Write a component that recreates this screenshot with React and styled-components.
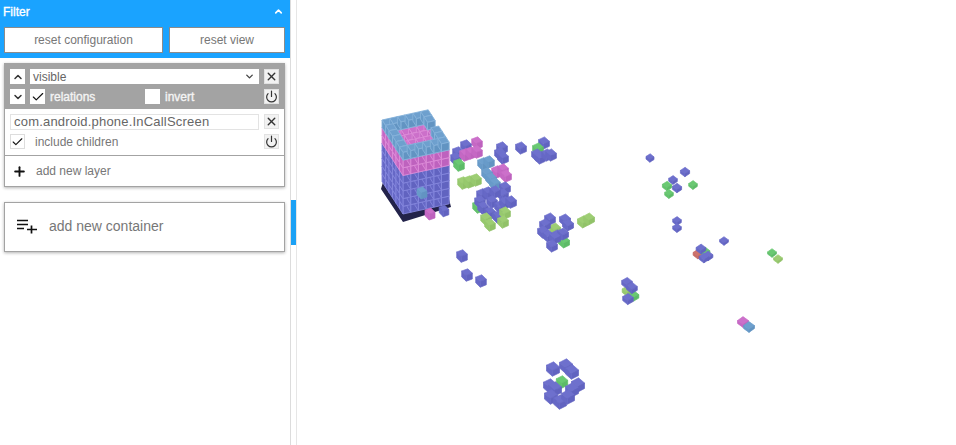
import React from "react";
import styled, { createGlobalStyle } from "styled-components";
import { ChevronUp, ChevronDown, X, Power, Check, Plus } from "lucide-react";

const Global = createGlobalStyle`
  html, body { margin: 0; padding: 0; background: #fff; overflow: hidden; }
  #root { height: 445px; }
  * { box-sizing: border-box; }
`;

const Page = styled.div`
  display: flex;
  width: 956px;
  height: 445px;
  font-family: "Liberation Sans", Arial, sans-serif;
  color: #777;
`;
const Sidebar = styled.aside`
  width: 290px;
  flex: none;
  display: flex;
  flex-direction: column;
`;
const Splitter = styled.div`
  position: relative;
  width: 7px;
  flex: none;
  border-left: 1px solid #dcdcdc;
  border-right: 1px solid #e6e6e6;
`;
const Thumb = styled.div`
  position: absolute;
  left: 0;
  top: 200px;
  width: 5px;
  height: 45px;
  background: #1ba1f5;
`;
const Header = styled.header`
  height: 58px;
  flex: none;
  background: #1aa3ff;
  padding: 0 4px;
  display: flex;
  flex-direction: column;
`;
const TitleRow = styled.div`
  height: 27px;
  display: flex;
  align-items: center;
  justify-content: space-between;
  padding-bottom: 4px;
  padding-right: 2px;
  margin-left: -1px;
  color: #fff;
  font-size: 12px;
  -webkit-text-stroke: 0.35px #fff;
`;
const HeaderButtons = styled.div`
  display: flex;
  gap: 6px;
`;
const HeaderButton = styled.button`
  width: ${(p) => p.$w}px;
  height: 26px;
  padding: 0 0 1px;
  background: #fff;
  border: 1px solid #8b8b8b;
  color: #777;
  font: 12px "Liberation Sans", Arial, sans-serif;
`;
const Card = styled.section`
  width: 281px;
  margin: ${(p) => p.$top}px 0 0 4px;
  background: #fff;
  border: 1px solid #a3a3a3;
  box-shadow: 0 1px 3px rgba(0, 0, 0, 0.3);
`;
const GrayPanel = styled.div`
  height: 45px;
  background: #a3a3a3;
  padding: 5px 5px 0;
  display: flex;
  flex-direction: column;
  gap: 5px;
`;
const Row = styled.div`
  display: flex;
  align-items: center;
  height: 15px;
`;
const SquareButton = styled.span`
  width: 15px;
  height: 15px;
  flex: none;
  display: flex;
  align-items: center;
  justify-content: center;
  background: ${(p) => (p.$ghost ? "#f2f2f2" : "#fff")};
  border: ${(p) => (p.$ghost ? "1px solid #e2e2e2" : "none")};
  color: #333;
`;
const SelectBox = styled.div`
  width: 229px;
  height: 15px;
  margin: 0 5px;
  background: #fff;
  display: flex;
  align-items: center;
  justify-content: space-between;
  padding: 0 4px 0 3px;
  font-size: 12px;
  color: #666;
`;
const CheckBox = styled.span`
  width: 15px;
  height: 15px;
  flex: none;
  margin-left: ${(p) => p.$left || 0}px;
  display: flex;
  align-items: center;
  justify-content: center;
  background: #fff;
  border: ${(p) => (p.$outlined ? "1px solid #ddd" : "none")};
  color: #111;
`;
const PanelLabel = styled.span`
  width: ${(p) => p.$w}px;
  padding-left: 5px;
  flex: none;
  color: #f4f4f4;
  font-size: 12px;
  -webkit-text-stroke: 0.35px #f4f4f4;
`;
const WhitePanel = styled.div`
  padding: 5px 5px 0;
  height: 47px;
  display: flex;
  flex-direction: column;
  gap: 5px;
  border-bottom: 1px solid #a3a3a3;
`;
const TextField = styled.input`
  width: 249px;
  height: 16px;
  margin-right: 5px;
  padding: 0 3px;
  border: 1px solid #e3e3e3;
  outline: none;
  color: #666;
  font: 13px "Liberation Sans", Arial, sans-serif;
  letter-spacing: 0.2px;
`;
const ChildLabel = styled.span`
  flex: 1;
  padding-left: 10px;
  font-size: 12px;
  color: #777;
`;
const AddRow = styled.div`
  height: 30px;
  display: flex;
  align-items: center;
  padding-left: 7px;
  gap: 9px;
  font-size: 12px;
  color: #777;
`;
const ContainerRow = styled.div`
  height: 48px;
  display: flex;
  align-items: center;
  padding: 0 0 2px 12px;
  gap: 11px;
  font-size: 14px;
  color: #777;
`;
const Scene = styled.main`
  flex: 1;
  min-width: 0;
  height: 445px;
`;
const SceneSvg = styled.svg`
  display: block;
  filter: blur(0.45px);
`;

const COL = {
  p: ["#6e70cd", "#6668c6", "#6163c0"],
  k: ["#cc70ca", "#c568c4", "#be62be"],
  b: ["#6ea0ce", "#689bc9", "#6294c2"],
  g: ["#6ac972", "#63c26d", "#5dbb67"],
  l: ["#9ece74", "#97c96e", "#91c268"],
  r: ["#cd736e", "#c76c66", "#c06660"],
};

// screen-space projection of one cube, drifting with the perspective across the canvas
function axes(x, s) {
  const t = Math.min(1, Math.max(0, (x - 440) / 300));
  const mix = (a, b) => s * (a + (b - a) * t);
  return {
    u: [mix(0.58, 0.55), mix(-0.2, -0.4)],
    v: [mix(-0.42, -0.55), mix(-0.42, -0.4)],
    w: [0, mix(-0.58, -0.28)],
  };
}
const pts = (a) => a.map((p) => p[0].toFixed(1) + "," + p[1].toFixed(1)).join(" ");
const add = (p, ...vs) => vs.reduce((r, v) => [r[0] + v[0], r[1] + v[1]], p);

function Cube({ x, y, c, s = 10.5 }) {
  const { u, v, w } = axes(x, s);
  const base = [x - u[0] / 2 - v[0] / 2 - w[0] / 2, y - u[1] / 2 - v[1] / 2 - w[1] / 2];
  const [top, left, right] = COL[c];
  const b0 = base, b1 = add(base, u), b2 = add(base, v);
  const t0 = add(b0, w), t1 = add(b1, w), t2 = add(b2, w), t3 = add(b0, u, v, w);
  return (
    <g strokeWidth="0.7" strokeLinejoin="round">
      <polygon points={pts([t0, t1, t3, t2])} fill={top} stroke={top} />
      <polygon points={pts([b0, b1, t1, t0])} fill={right} stroke={right} />
      <polygon points={pts([b0, b2, t2, t0])} fill={left} stroke={left} />
    </g>
  );
}

const SCATTER = [
  "k477,143", "p466,146", "p458,153", "p456,159", "g459,165", "k465,155", "k471,153", "k477,152",
  "p502,148", "p500,154", "p503,158", "p521,148", "p544,143", "g538,149", "p537,155", "p540,158", "p547,155", "p551,155",
  "b483,164", "b489,162", "k497,172", "k503,170", "k506,176", "l463,183", "l469,182", "l476,180",
  "g478,207", "b487,174", "b491,179", "b495,184",
  "p505,188", "p503,195", "p482,195", "p488,193", "p495,192", "p480,202", "p483,208", "p492,202", "p500,207", "p505,203", "p511,202", "p490,213", "p498,217",
  "l486,219", "l490,225", "l505,213", "l503,222",
  "g564,242", "l555,229", "p550,219", "p545,225", "p543,232", "p548,236", "p557,236", "p563,234", "p555,238", "p552,246", "p565,220", "p568,225",
  "l583,222", "l589,219",
  "p462,256", "p467,275", "p481,281",
  "p553,369:12.5", "p566,366:12.5", "p572,372:12.5", "g562,382:11", "p550,386:12.5", "p555,389:12.5", "p551,397:12.5", "p560,402:12.5", "p578,385:12.5", "p572,390:12.5", "p568,397:12.5",
  "p650,158:7.5", "p685,172:8.5", "p673,180:8", "p677,188:8.5", "g667,186:8.5", "g669,194:8", "g693,185:8",
  "p677,221:8", "p677,228:8", "p724,241:8", "r698,254:9", "g705,252:9", "p701,249:9", "p708,256:9", "p704,258:9",
  "g772,253:8", "l778,259:8", "k743,322:10", "b749,327:10",
  "l627,291:9", "g634,296:9", "p627,283:10", "p632,288:10", "p628,299:10",
];

const parseCube = (d) => {
  const [, c, x, y, s] = d.match(/^(\w)(\d+),(\d+)(?::([\d.]+))?$/);
  return { c, x: +x, y: +y, s: s ? +s : 10.5 };
};

// The tower: a voxel block with a hollow top
const U = [7.7, -1.7];
const V = [-3.5, -5.4];
const W = [0, -7.7];
const ORIGIN = [403, 214];
const N = 6;

function towerColor(z) {
  if (z >= 7) return "b";
  if (z >= 5) return "k";
  return "p";
}
function inTower(i, j, z) {
  if (z < 7) return true;
  if (i >= 1 && i <= 4 && j >= 1 && j <= 4) return false;
  if (i === 5 && j === 3) return false;
  return true;
}
function Voxel({ i, j, z }) {
  const base = add(ORIGIN, [U[0] * i + V[0] * j, U[1] * i + V[1] * j], [W[0] * z, W[1] * z]);
  const c = towerColor(z);
  const [top, left, right] = COL[c];
  const b1 = add(base, U), b2 = add(base, V);
  const t0 = add(base, W), t1 = add(b1, W), t2 = add(b2, W), t3 = add(base, U, V, W);
  const edge = c === "b" ? "#86b2da" : c === "k" ? "#dc8cd8" : "#8587dc";
  return (
    <g stroke={edge} strokeWidth="0.9">
      <polygon points={pts([t0, t1, t3, t2])} fill={top} />
      <polygon points={pts([base, b1, t1, t0])} fill={right} />
      <polygon points={pts([base, b2, t2, t0])} fill={left} />
    </g>
  );
}

function Tower() {
  const items = [];
  for (let z = 0; z < 8; z++) {
    for (let j = N - 1; j >= 0; j--) {
      for (let i = 0; i < N; i++) {
        if (inTower(i, j, z)) items.push(<Voxel key={`${i}-${j}-${z}`} i={i} j={j} z={z} />);
      }
    }
  }
  return <g>{items}</g>;
}

function SceneDrawing() {
  return (
    <SceneSvg width="659" height="445" viewBox="297 0 659 445">
      <Cube x={387} y={187} c="g" s={7} />
      <polygon points="381,189 403,222 451,207 449,199 403,212 383,182" fill="#23234a" />
      <Tower />
      <Cube x={422} y={193} c="b" s={10} />
      <Cube x={430} y={214} c="k" s={10} />
      <Cube x={444} y={211} c="p" s={9.5} />
      {SCATTER.map((d, n) => (
        <Cube key={n} {...parseCube(d)} />
      ))}
    </SceneSvg>
  );
}

function ListAddIcon() {
  return (
    <svg width="21" height="15" viewBox="0 0 21 15" fill="none" stroke="#111" strokeWidth="1.7">
      <path d="M0 1.5h11M0 5.5h11M0 9.5h7M14.5 6.5v8M10 10.5h10" />
    </svg>
  );
}

export default function App() {
  return (
    <>
      <Global />
      <Page>
        <Sidebar>
          <Header>
            <TitleRow>
              Filter
              <ChevronUp size={11} strokeWidth={3.5} color="#fff" />
            </TitleRow>
            <HeaderButtons>
              <HeaderButton $w={159}>reset configuration</HeaderButton>
              <HeaderButton $w={116}>reset view</HeaderButton>
            </HeaderButtons>
          </Header>
          <Card $top={5}>
            <GrayPanel>
              <Row>
                <SquareButton><ChevronUp size={12} strokeWidth={3} /></SquareButton>
                <SelectBox>
                  visible
                  <ChevronDown size={11} strokeWidth={3} color="#444" />
                </SelectBox>
                <SquareButton $ghost><X size={13} strokeWidth={2.6} /></SquareButton>
              </Row>
              <Row>
                <SquareButton><ChevronDown size={12} strokeWidth={3} /></SquareButton>
                <CheckBox $left={5}><Check size={14} strokeWidth={2} /></CheckBox>
                <PanelLabel $w={100}>relations</PanelLabel>
                <CheckBox />
                <PanelLabel $w={104}>invert</PanelLabel>
                <SquareButton $ghost><Power size={13} strokeWidth={2.2} /></SquareButton>
              </Row>
            </GrayPanel>
            <WhitePanel>
              <Row>
                <TextField readOnly value="com.android.phone.InCallScreen" />
                <SquareButton $ghost><X size={13} strokeWidth={2.6} /></SquareButton>
              </Row>
              <Row>
                <CheckBox $outlined><Check size={14} strokeWidth={2} /></CheckBox>
                <ChildLabel>include children</ChildLabel>
                <SquareButton $ghost><Power size={13} strokeWidth={2.2} /></SquareButton>
              </Row>
            </WhitePanel>
            <AddRow>
              <Plus size={15} strokeWidth={3} color="#111" />
              add new layer
            </AddRow>
          </Card>
          <Card $top={15}>
            <ContainerRow>
              <ListAddIcon />
              add new container
            </ContainerRow>
          </Card>
        </Sidebar>
        <Splitter><Thumb /></Splitter>
        <Scene><SceneDrawing /></Scene>
      </Page>
    </>
  );
}
